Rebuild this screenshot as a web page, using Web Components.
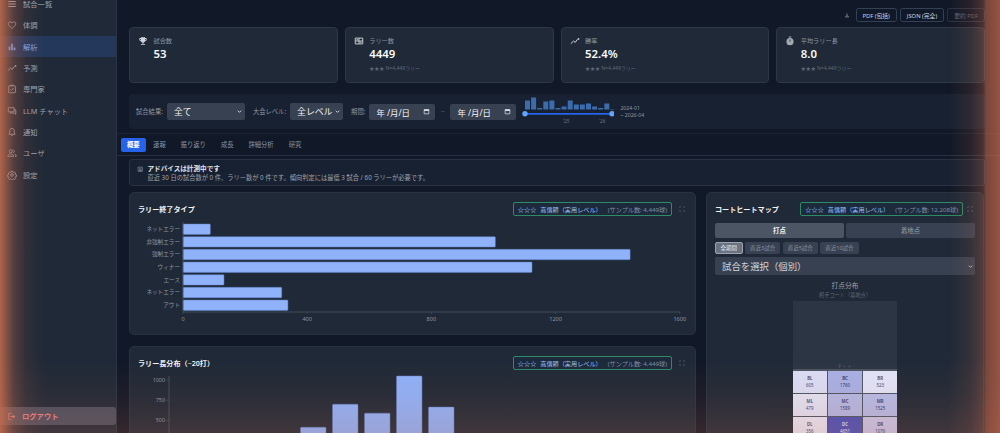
<!DOCTYPE html>
<html lang="ja">
<head>
<meta charset="utf-8">
<title>解析</title>
<style>
  html, body { margin: 0; height: 433px; overflow: hidden; background: #111827; }
  body { font-family: "Noto Sans", "Noto Sans CJK JP", sans-serif; color: #e5e7eb; display: flex; }
</style>
</head>
<body>
<side-nav></side-nav>
<main-pane>
  <export-bar></export-bar>
  <stat-row>
    <stat-card icon="trophy" label="試合数" value="53"></stat-card>
    <stat-card icon="score" label="ラリー数" value="4449" note="N=4,449ラリー"></stat-card>
    <stat-card icon="trend" label="勝率" value="52.4%" note="N=4,449ラリー"></stat-card>
    <stat-card icon="timer" label="平均ラリー長" value="8.0" note="N=4,449ラリー"></stat-card>
  </stat-row>
  <filter-bar></filter-bar>
  <tab-bar></tab-bar>
  <advice-note></advice-note>
  <chart-layout>
    <chart-card slot="left" heading="ラリー終了タイプ" sample="4,449球"><end-type-chart></end-type-chart></chart-card>
    <chart-card slot="left" heading="ラリー長分布（~20打）" sample="4,449球"><rally-chart></rally-chart></chart-card>
    <chart-card slot="right" tight heading="コートヒートマップ" sample="12,208球"><court-heatmap></court-heatmap></chart-card>
  </chart-layout>
</main-pane>
<edge-glow></edge-glow>

<script>
// small icon set, all 24x24
const ICONS = {
  list: '<path fill="currentColor" d="M3 5h18v2.4H3zM3 10.8h18v2.4H3zM3 16.6h18V19H3z"/>',
  heart: '<path fill="none" stroke="currentColor" stroke-width="2" d="M12 20.3C5.5 14.8 3 12.2 3 8.8 3 6.2 5 4.5 7.3 4.5c1.900 0 3.500 1 4.700 2.900 1.200-1.900 2.800-2.900 4.700-2.900C19 4.500 21 6.200 21 8.800c0 3.400-2.500 6-9 11.500z"/>',
  bars: '<path fill="currentColor" d="M4 11h4v9H4zM10 4h4v16h-4zM16 13h4v7h-4z"/>',
  trend: '<path fill="none" stroke="currentColor" stroke-width="2.400" stroke-linecap="round" stroke-linejoin="round" d="M2.500 18l6-6 4 3.500 5-7"/><circle cx="20.500" cy="7" r="2" fill="currentColor"/>',
  check: '<path fill="none" stroke="currentColor" stroke-width="2" d="M5 4.500h14a1 1 0 0 1 1 1V20a1 1 0 0 1-1 1H5a1 1 0 0 1-1-1V5.500a1 1 0 0 1 1-1zM9 4.500V2.800h6v1.700M8 12.500l3 3 5-6"/>',
  chat: '<path fill="none" stroke="currentColor" stroke-width="2" d="M3 4h14v10H3zM17 9h4v11l-3.500-3H8v-3"/>',
  bell: '<path fill="none" stroke="currentColor" stroke-width="2" stroke-linejoin="round" d="M12 3.500c-3.500 0-5.500 2.500-5.500 6v5L4.500 17.500h15l-2-3v-5c0-3.500-2-6-5.500-6z"/><path fill="currentColor" d="M10 19h4a2 2 0 0 1-4 0z"/>',
  users: '<circle cx="9" cy="8" r="3.600" fill="none" stroke="currentColor" stroke-width="2"/><path fill="none" stroke="currentColor" stroke-width="2" d="M2 20v-1.500c0-2.500 3.500-4 7-4s7 1.500 7 4V20zM15 4.600a3.600 3.600 0 0 1 0 6.800M18 14.800c2.400.6 4 1.800 4 3.700V20h-3"/>',
  gear: '<circle cx="12" cy="12" r="3.200" fill="none" stroke="currentColor" stroke-width="2"/><path fill="none" stroke="currentColor" stroke-width="2" stroke-linejoin="round" d="M10.200 2.800h3.600l.5 2.700 1.800.8 2.300-1.500 2.500 2.500-1.500 2.300.8 1.800 2.700.5v3.600l-2.700.5-.8 1.800 1.500 2.300-2.500 2.500-2.300-1.500-1.800.8-.5 2.700h-3.600l-.5-2.700-1.800-.8-2.300 1.500-2.500-2.500 1.500-2.300-.8-1.800-2.700-.5v-3.600l2.700-.5.8-1.800-1.500-2.300 2.500-2.500 2.300 1.500 1.800-.8z"/>',
  logout: '<path fill="none" stroke="currentColor" stroke-width="2.400" d="M12 4H4.500v16H12"/><path fill="currentColor" d="M9 10.800h7V7l6 5-6 5v-3.800H9z"/>',
  trophy: '<path fill="currentColor" d="M19 5h-2V3H7v2H5c-1.100 0-2 .9-2 2v1c0 2.550 1.920 4.630 4.390 4.940.63 1.500 1.980 2.630 3.610 2.960V19H7v2h10v-2h-4v-3.100c1.630-.33 2.980-1.460 3.610-2.960C19.080 12.630 21 10.550 21 8V7c0-1.100-.9-2-2-2zM5 8V7h2v3.820C5.840 10.400 5 9.300 5 8zm14 0c0 1.300-.84 2.400-2 2.820V7h2v1z"/>',
  score: '<path fill="none" stroke="currentColor" stroke-width="2.200" d="M3 5h18v14H3zM12 5v14M3 12h18"/><path fill="currentColor" d="M6 8h4v2H6zM14 14h4v2h-4z"/>',
  timer: '<circle cx="12" cy="13.500" r="8.500" fill="currentColor" opacity=".75"/><path fill="currentColor" d="M9 1.500h6v2H9z"/><path stroke="#1f2937" stroke-width="2" d="M12 8.500v5"/>',
  download: '<path fill="currentColor" d="M11 4h2v8h3l-4 4-4-4h3zM4 18h16v2.500H4z"/>',
  calendar: '<path fill="none" stroke="currentColor" stroke-width="2.400" d="M4 5.500h16V20H4z"/><path fill="currentColor" d="M4 5h16v5H4z"/>',
  note: '<path fill="none" stroke="currentColor" stroke-width="2.200" d="M4 4h16v16H4z"/><path fill="currentColor" d="M7 13h10v4.500H7z"/><path stroke="currentColor" stroke-width="2" d="M7 8.500h10"/>',
  expand: '<path fill="none" stroke="currentColor" stroke-width="2.400" d="M3 8V3h5M16 3h5v5M21 16v5h-5M8 21H3v-5"/>',
  chevron: '<path fill="none" stroke="currentColor" stroke-width="4" d="M4 8l8 8 8-8"/>'
};
const svgIcon = (name, size) =>
  `<svg width="${size}" height="${size}" viewBox="0 0 24 24" aria-hidden="true" style="display:block;flex:none">${ICONS[name]}</svg>`;

// helper so every element below stays a few lines
function define(tag, css, render) {
  customElements.define(tag, class extends HTMLElement {
    connectedCallback() {
      if (this.shadowRoot) return;
      this.attachShadow({ mode: 'open' });
      this.shadowRoot.innerHTML = `<style>${css}</style>${render(this)}`;
    }
  });
}

// ── Sidebar ──────────────────────────────────────────────

const NAV = [
  ['list', '試合一覧'], ['heart', '体調'], ['bars', '解析', true], ['trend', '予測'],
  ['check', '専門家'], ['chat', 'LLM チャット'], ['bell', '通知'], ['users', 'ユーザ'], ['gear', '設定']
];

define('side-nav', `
  :host { display: flex; flex-direction: column; flex: none; width: 116px; height: 433px;
    background: #1f2937; border-right: 1px solid #2a3444; }
  nav { margin-top: -6.500px; flex: 1; }
  .item { display: flex; align-items: center; height: 21.340px; gap: 6px; padding-left: 7px;
    font-size: 7.300px; color: #9ca3af; }
  .item.on { background: #24385c; color: #7aa7f5; }
  .logout { display: flex; align-items: center; gap: 6px; height: 18px; margin-bottom: 8px; padding-left: 7px;
    background: #4a4f60; border-radius: 0 3px 3px 0; color: #ee8080; font-size: 7.300px; font-weight: 600; }
`, () => `
  <nav>${NAV.map(([i, t, on]) => `<div class="item${on ? ' on' : ''}">${svgIcon(i, 10)}<span>${t}</span></div>`).join('')}</nav>
  <div class="logout">${svgIcon('logout', 9)}<span>ログアウト</span></div>
`);

// ── Main column ──────────────────────────────────────────

define('main-pane', `
  :host { display: block; flex: 1; min-width: 0; height: 433px; overflow: hidden; padding: 8px 15px 0 12px;
    box-sizing: border-box; background: #111827; }
`, () => '<slot></slot>');

define('export-bar', `
  :host { display: flex; justify-content: flex-end; align-items: center; gap: 3px; height: 14px; margin-bottom: 5px; }
  svg { color: #9ca3af; margin-right: 3px; }
  .btn { height: 14px; box-sizing: border-box; display: flex; align-items: center; padding: 0 6px;
    border: 1px solid #334155; border-radius: 2.500px; font-size: 5.800px; color: #cbd5e1; }
  .btn.off { color: #596473; border-color: #283244; }
`, () => `
  ${svgIcon('download', 6)}
  <div class="btn">PDF (包括)</div><div class="btn">JSON (完全)</div><div class="btn off">要約 PDF</div>
`);

define('stat-row', `
  :host { display: grid; grid-template-columns: repeat(4, 1fr); gap: 7px; margin-bottom: 11px; }
`, () => '<slot></slot>');

define('stat-card', `
  :host { display: flex; gap: 5.500px; height: 56px; box-sizing: border-box; padding: 7px 8px;
    background: #1f2937; border: 1px solid #2c3747; border-radius: 4px; }
  .ic { color: #d1d5db; padding-top: 1px; }
  .label { font-size: 6.200px; line-height: 9px; color: #8b95a3; margin-top: 1px; }
  .value { font-size: 11.400px; font-weight: 600; line-height: 14px; color: #f9fafb; margin-top: 2px; }
  .note { font-size: 5px; line-height: 7px; color: #5e6979; margin-top: 4px; }
`, el => `
  <div class="ic">${svgIcon(el.getAttribute('icon'), 10)}</div>
  <div>
    <div class="label">${el.getAttribute('label')}</div>
    <div class="value">${el.getAttribute('value')}</div>
    ${el.getAttribute('note') ? `<div class="note">★★★ ${el.getAttribute('note')}</div>` : ''}
  </div>
`);

// ── Filters ──────────────────────────────────────────────

const HIST = [9, 12, 1.500, 8, 9, 1.500, 3, 9, 5, 5, 6, 3, 1.500, 6, .5];

define('filter-bar', `
  :host { display: flex; align-items: center; height: 35px; box-sizing: border-box; padding: 0 7px;
    background: #182131; border-radius: 4px; font-size: 6.300px; color: #8b95a3; margin-bottom: 4px; }
  .sel { display: flex; align-items: center; justify-content: space-between; height: 17px; box-sizing: border-box;
    padding: 0 3px 0 7px; background: #374151; border-radius: 2px; color: #f3f4f6; font-size: 8.800px; margin: 0 8px 0 4px; white-space: nowrap; }
  .date { display: flex; align-items: center; justify-content: space-between; width: 66px; height: 16px; box-sizing: border-box;
    padding: 0 5px 0 7px; background: #374151; border-radius: 2px; color: #f3f4f6; font-size: 8.400px; }
  .date svg { color: #e5e7eb; }
  .til { width: 15px; text-align: center; color: #5e6979; }
  svg.range { display: block; margin-left: 6px; flex: none; }
  .span { font-size: 5.200px; line-height: 7px; margin-left: 6px; color: #8b95a3; white-space: nowrap; }
`, () => {
  const bars = HIST.map((h, i) => `<rect x="${3 + i * 6.100}" y="${14.500 - h}" width="5" height="${h}" fill="#3b6cab"/>`).join('');
  return `
    <span>試合結果:</span><div class="sel" style="width:78px">全て${svgIcon('chevron', 5)}</div>
    <span>大会レベル:</span><div class="sel" style="width:53px">全レベル${svgIcon('chevron', 5)}</div>
    <span>期間:</span><span style="width:4px"></span>
    <div class="date">年 /月/日${svgIcon('calendar', 7)}</div><span class="til">~</span>
    <div class="date">年 /月/日${svgIcon('calendar', 7)}</div>
    <svg class="range" width="92" height="33" viewBox="0 0 92 33">
      ${bars}
      <path d="M3 18.800h87" stroke="#2563eb" stroke-width="1.800"/>
      <circle cx="3" cy="18.800" r="2.700" fill="#60a5fa"/><circle cx="90" cy="18.800" r="2.700" fill="#60a5fa"/>
      <text x="41" y="28" font-size="4.600" fill="#6b7585">'25</text>
      <text x="77" y="28" font-size="4.600" fill="#6b7585">'26</text>
    </svg>
    <div class="span">2024-01<br>~ 2026-04</div>
  `;
});

const TABS = ['概要', '速報', '振り返り', '成長', '詳細分析', '研究'];

define('tab-bar', `
  :host { display: flex; align-items: center; height: 23px; box-sizing: border-box; margin: 0 -15px 3px -12px; padding-left: 4px;
    border-top: 1px solid #1b2433; border-bottom: 1px solid #263040; }
  .t { display: flex; align-items: center; height: 14px; padding: 0 7.500px; border-radius: 2px; font-size: 6.300px; color: #8b95a3; }
  .t.on { background: #2563eb; color: #fff; font-weight: 600; padding: 0 6px; }
`, () => TABS.map((t, i) => `<div class="t${i ? '' : ' on'}">${t}</div>`).join(''));

define('advice-note', `
  :host { display: flex; gap: 4px; height: 27px; box-sizing: border-box; padding: 4px 7px;
    background: #182131; border: 1px solid #283244; border-radius: 3px; margin-bottom: 6px; }
  svg { color: #8b95a3; margin-top: 2px; }
  .h { font-size: 6.600px; line-height: 9px; font-weight: 600; color: #e5e7eb; }
  .b { font-size: 6.250px; line-height: 9px; color: #9ca3af; }
`, () => `
  ${svgIcon('note', 6.500)}
  <div><div class="h">アドバイスは計測中です</div>
  <div class="b">直近 30 日の試合数が 0 件、ラリー数が 0 件です。傾向判定には最低 3 試合 / 60 ラリーが必要です。</div></div>
`);

// ── Charts ───────────────────────────────────────────────

define('chart-layout', `
  :host { display: grid; grid-template-columns: 567px 278px; gap: 10px; align-items: start; }
  .col { display: flex; flex-direction: column; gap: 11px; }
`, () => '<div class="col"><slot name="left"></slot></div><div class="col"><slot name="right"></slot></div>');

define('chart-card', `
  :host { display: block; box-sizing: border-box; padding: 9px 8px; background: #1f2937;
    border: 1px solid #283243; border-radius: 5px; }
  header { display: flex; align-items: center; height: 14px; margin-bottom: 2px; }
  h3 { margin: 0; flex: 1; font-size: 7.100px; font-weight: 600; color: #f3f4f6; }
  .badge { display: flex; align-items: center; height: 14px; box-sizing: border-box; padding: 0 4px;
    border: 1px solid #2f8a66; border-radius: 2px; background: #1c2a3c; font-size: 6.150px; color: #93c5fd; white-space: nowrap; }
  .badge i { font-style: normal; color: #7f8ea3; margin-left: 6px; }
  .badge b { font-weight: 700; margin-right: 4px; }
  .exp { color: #5e6979; margin: 0 2px 0 7px; }
  :host([tight]) .exp { margin-left: 4px; }
`, el => `
  <header>
    <h3>${el.getAttribute('heading')}</h3>
    <div class="badge"><b>☆☆☆</b>高信頼（実用レベル）<i>(サンプル数: ${el.getAttribute('sample')})</i></div>
    <div class="exp">${svgIcon('expand', 6)}</div>
  </header>
  <slot></slot>
`);

const END_TYPES = [
  ['ネットエラー', 88], ['非強制エラー', 1006], ['強制エラー', 1440], ['ウィナー', 1124],
  ['エース', 132], ['ネットエラー', 318], ['アウト', 338]
];

define('end-type-chart', `
  :host { display: block; height: 107px; }
  svg { display: block; }
  text { font-size: 5.600px; fill: #8b95a3; }
`, () => {
  const x0 = 45, k = 124.200 / 400, rows = [];
  END_TYPES.forEach(([name, v], i) => {
    const y = 6 + i * 12.670;
    rows.push(`<text x="${x0 - 3}" y="${y + 7}" text-anchor="end">${name}</text>
      <rect x="${x0}" y="${y}" width="${v * k}" height="10.400" rx=".8" fill="#8fb2fb" stroke="#5f7fc4" stroke-width=".5"/>`);
  });
  const ticks = [0, 400, 800, 1200, 1600].map(t =>
    `<path d="M${x0 + t * k} 94v2" stroke="#4b5563" stroke-width=".6"/><text x="${x0 + t * k}" y="103" text-anchor="middle">${t}</text>`).join('');
  return `<svg width="549" height="107" viewBox="0 0 549 107">${rows.join('')}
    <path d="M${x0} 4V94H542" fill="none" stroke="#4b5563" stroke-width=".8"/>${ticks}</svg>`;
});

const RALLY = [[300.500, 415], [332.500, 700], [364.500, 590], [396.500, 1050], [428.500, 665]];

define('rally-chart', `
  :host { display: block; height: 110px; }
  svg { display: block; }
  text { font-size: 5.400px; fill: #8b95a3; }
`, () => {
  // svg starts at x 138, y 373 of the page
  const y1000 = 8, k = 20.200 / 250;
  const bars = RALLY.map(([x, v]) =>
    `<rect x="${x - 138}" y="${y1000 + (1000 - v) * k}" width="25.500" height="${v * k}" rx=".8" fill="#8fb2fb" stroke="#5f7fc4" stroke-width=".5"/>`).join('');
  const ticks = [1000, 750, 500].map(t =>
    `<text x="27" y="${y1000 + (1000 - t) * k + 2}" text-anchor="end">${t}</text><path d="M28 ${y1000 + (1000 - t) * k}h3" stroke="#4b5563" stroke-width=".6"/>`).join('');
  return `<svg width="549" height="110" viewBox="0 0 549 110">
    <path d="M31 4V110" stroke="#4b5563" stroke-width=".8"/>${ticks}${bars}</svg>`;
});

const CELLS = [
  ['BL', '605', '#dadef7', '#3b4373'], ['BC', '1760', '#a8b1e6', '#2d3570'], ['BR', '523', '#e2e5fa', '#3b4373'],
  ['ML', '479', '#e2e3f6', '#3b4373'], ['MC', '1589', '#b3b9e6', '#2d3570'], ['MR', '1525', '#b6bce9', '#2d3570'],
  ['DL', '356', '#e8e6f7', '#3b4373'], ['DC', '4651', '#4a50b8', '#e8eaff'], ['DR', '1076', '#c7c6ea', '#2d3570']
];

define('court-heatmap', `
  :host { display: block; margin-top: 7px; }
  .seg { display: grid; grid-template-columns: 1fr 1fr; gap: 2px; }
  .seg div { height: 15px; display: flex; align-items: center; justify-content: center; border-radius: 2px;
    background: #374151; color: #9ca3af; font-size: 6.400px; }
  .seg .on { background: #4b5563; color: #f3f4f6; font-weight: 600; }
  .pills { display: flex; gap: 2.500px; margin-top: 4px; }
  .pills div { height: 12px; padding: 0 5px; display: flex; align-items: center; border-radius: 2px;
    background: #374151; color: #8a94a3; font-size: 5.500px; }
  .pills .on { background: #6b7280; color: #e5e7eb; border: 1px solid #9ca3af; box-sizing: border-box; padding: 0 4.500px; }
  .pick { display: flex; align-items: center; justify-content: space-between; height: 18px; margin-top: 3px; padding: 0 2px 0 7px;
    background: #374151; border-radius: 2px; color: #d1d5db; font-size: 9.400px; }
  .cap { text-align: center; font-size: 6.800px; line-height: 9px; color: #9ca3af; margin-top: 6px; }
  .sub { text-align: center; font-size: 5.200px; line-height: 8px; color: #5e6979; margin-top: 1px; }
  .court { width: 104px; margin: 2px auto 0; background: #2b3543; }
  .far { height: 68px; border-bottom: 1px solid #4b5563; position: relative; }
  .far span { position: absolute; left: 0; right: 0; bottom: 0; text-align: center; font-size: 4px; color: #5e6979; letter-spacing: 1px; }
  .grid { display: grid; grid-template-columns: repeat(3, 1fr); gap: 1.500px; padding-top: 1px; background: #4b5563; }
  .c { height: 21.500px; display: flex; flex-direction: column; align-items: center; justify-content: center;
    font-size: 4.400px; line-height: 6.500px; }
  .c b { font-weight: 600; }
`, () => `
  <div class="seg"><div class="on">打点</div><div>着地点</div></div>
  <div class="pills"><div class="on">全期間</div><div>直近3試合</div><div>直近5試合</div><div>直近10試合</div></div>
  <div class="pick">試合を選択（個別）${svgIcon('chevron', 5)}</div>
  <div class="cap">打点分布</div>
  <div class="sub">相手コート（着地点）</div>
  <div class="court">
    <div class="far"><span>ネット</span></div>
    <div class="grid">${CELLS.map(([n, v, bg, fg]) =>
      `<div class="c" style="background:${bg};color:${fg}"><b>${n}</b><span>${v}</span></div>`).join('')}</div>
  </div>
`);

// warm glow lying over the window edges
define('edge-glow', `
  :host { position: fixed; inset: 0; pointer-events: none; z-index: 10; display: block;
    background:
      linear-gradient(90deg, rgba(200,108,78,.88) 0, rgba(200,108,78,.62) 6px, rgba(200,108,78,.3) 14px, rgba(200,108,78,.1) 26px, rgba(200,108,78,0) 45px),
      linear-gradient(270deg, rgba(200,108,78,.72) 0, rgba(200,108,78,.56) 14px, rgba(200,108,78,.3) 17px, rgba(200,108,78,.12) 30px, rgba(200,108,78,0) 52px),
      linear-gradient(0deg, rgba(200,108,78,.2) 0, rgba(200,108,78,.08) 35px, rgba(200,108,78,0) 75px); }
`, () => '');
</script>
</body>
</html>
